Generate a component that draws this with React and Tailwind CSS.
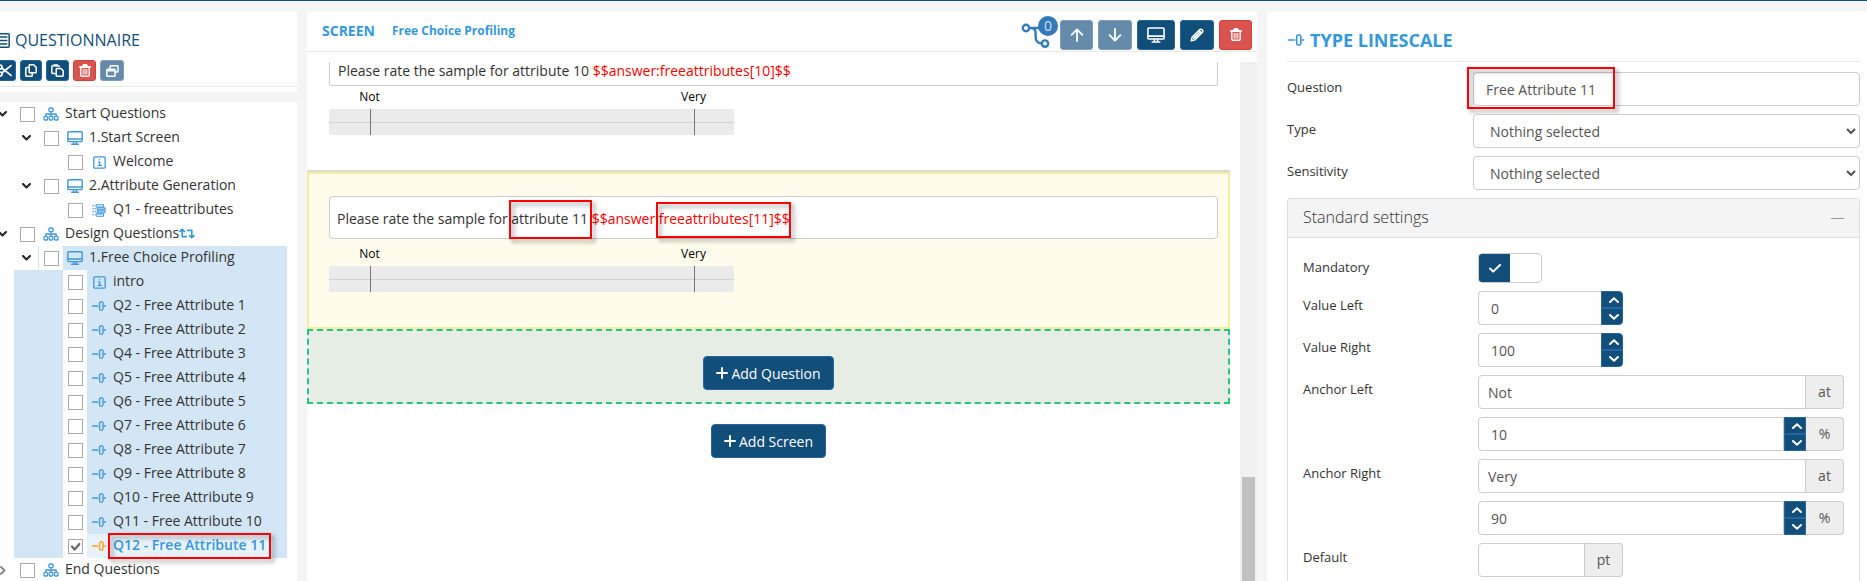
import React, { useState } from 'react';

/* ---------- icons ---------- */

const Icon = ({ w = 16, h = 16, box, className = '', sw = 1.4, children }) => (
  <svg
    width={w}
    height={h}
    viewBox={box || `0 0 ${w} ${h}`}
    fill="none"
    stroke="currentColor"
    strokeWidth={sw}
    strokeLinecap="round"
    strokeLinejoin="round"
    className={`shrink-0 ${className}`}
    aria-hidden="true"
  >
    {children}
  </svg>
);

const ChevronDown = ({ className }) => (
  <Icon w={9} h={6} sw={2} className={className}>
    <path d="M1 1l3.5 3.5L8 1" />
  </Icon>
);

const ChevronRight = ({ className }) => (
  <Icon w={6} h={9} sw={2} className={className}>
    <path d="M1 1l3.5 3.5L1 8" />
  </Icon>
);

const ChevronUp = () => (
  <Icon w={10} h={6} sw={2}>
    <path d="M1 5l4-3.7L9 5" />
  </Icon>
);

const SpinDown = () => (
  <Icon w={10} h={6} sw={2}>
    <path d="M1 1l4 3.7L9 1" />
  </Icon>
);

const SitemapIcon = () => (
  <Icon w={16} h={14} sw={1.3}>
    <rect x="5.9" y="1" width="4.2" height="3.6" rx="1" />
    <path d="M8 4.6v4.6M2.8 9.4V7h10.4v2.4" />
    <rect x="1" y="9.4" width="3.6" height="3.6" rx="1" />
    <rect x="6.2" y="9.4" width="3.6" height="3.6" rx="1" />
    <rect x="11.4" y="9.4" width="3.6" height="3.6" rx="1" />
  </Icon>
);

const MonitorIcon = ({ w = 16, h = 14, className }) => (
  <Icon w={w} h={h} box="0 0 16 14" className={className}>
    <rect x="0.8" y="0.8" width="14.4" height="9.8" rx="1" />
    <path d="M1 8h14M6.6 10.8v2M9.4 10.8v2M4.6 13.2h6.8" />
  </Icon>
);

const InfoIcon = () => (
  <Icon w={13} h={13} sw={1.3}>
    <rect x="0.8" y="0.8" width="11.4" height="11.4" rx="1.2" />
    <path d="M5.4 5.8h1.3v3.4M5 9.4h3.4M6.5 3.4v.3" />
  </Icon>
);

const AttributesIcon = () => (
  <Icon w={14} h={13} sw={1.1}>
    <path d="M.8 1.8h.8M.8 4.8h.8M.8 7.8h.8M.8 10.8h.8M3 4.8h1M3 7.8h1" />
    <rect x="4" y="0.7" width="7.6" height="2.3" rx="0.6" />
    <rect x="5.4" y="3.9" width="7.8" height="1.9" rx="0.6" />
    <rect x="5.4" y="6.9" width="7.8" height="1.9" rx="0.6" />
    <rect x="4" y="9.9" width="7.6" height="2.3" rx="0.6" />
  </Icon>
);

const LinescaleIcon = ({ w = 14, h = 10, className }) => (
  <Icon w={w} h={h} box="0 0 14 10" sw={1.3} className={className}>
    <path d="M0.7 5h5.2M11.2 5h2.2" />
    <rect x="7.6" y="0.9" width="3.4" height="8.2" rx="1" />
  </Icon>
);

const RandomizeIcon = () => (
  <Icon w={16} h={12} sw={1.6} className="text-[#3498db]">
    <path d="M1 3.4L3.2 1.2l2.2 2.2M3.2 1.4V8.6h4.2" />
    <path d="M8.6 2.4h4.2v7M10.6 7.6l2.2 2.2L15 7.6" />
  </Icon>
);

const ListIcon = () => (
  <Icon w={15} h={15} sw={1.5}>
    <rect x="0.8" y="0.8" width="13.4" height="13.4" rx="1" />
    <path d="M3 4h.2M3 7.5h.2M3 11h.2M5.4 4h6.4M5.4 7.5h6.4M5.4 11h6.4" />
  </Icon>
);

const ScissorsIcon = () => (
  <Icon w={15} h={13} sw={1.7}>
    <circle cx="3" cy="3" r="2" />
    <circle cx="3" cy="10" r="2" />
    <path d="M4.8 4L14 11.4M4.8 9L14 1.6" />
  </Icon>
);

const CopyIcon = () => (
  <Icon w={12} h={13} sw={1.5}>
    <path d="M4.2 1.4c0-.4.3-.6.6-.6h3.8l2.6 2.6v4.8c0 .4-.3.6-.6.6H4.8c-.3 0-.6-.2-.6-.6z" />
    <path d="M4 3.6H1.6c-.4 0-.8.4-.8.8v7c0 .4.4.8.8.8h4.8c.4 0 .8-.4.8-.8V9" />
  </Icon>
);

const PasteIcon = () => (
  <Icon w={13} h={13} sw={1.5}>
    <path d="M4 9.4H1.6c-.4 0-.8-.4-.8-.8V2.6c0-.4.4-.8.8-.8h5.8c.4 0 .8.4.8.8" />
    <path d="M3 1.2h3.2" strokeWidth="2" />
    <path d="M5.2 5.2c0-.4.3-.6.6-.6h4.2l2.2 2.2v4.8c0 .4-.3.6-.6.6H5.8c-.3 0-.6-.2-.6-.6z" />
  </Icon>
);

const TrashIcon = () => (
  <Icon w={12} h={13} sw={1.4}>
    <path d="M1 3h10M3.8 2.8l.7-1.8h3l.7 1.8" strokeWidth="1.8" />
    <path d="M1.8 3.4v7.8c0 .6.4 1 1 1h6.4c.6 0 1-.4 1-1V3.4" />
    <path d="M4.2 5.4v4.8M6 5.4v4.8M7.8 5.4v4.8" strokeWidth="1" />
  </Icon>
);

const WindowsIcon = () => (
  <Icon w={13} h={12} sw={1.5}>
    <path d="M4 3.4V1.6c0-.4.4-.8.8-.8h6.4c.4 0 .8.4.8.8v4.6c0 .4-.4.8-.8.8H9.6" />
    <rect x="0.8" y="4.2" width="8.2" height="7" rx="0.8" />
    <path d="M1 5.4h7.8" strokeWidth="2" />
  </Icon>
);

const ArrowUp = () => (
  <Icon w={14} h={14} sw={1.8}>
    <path d="M7 13V1.4M1.6 6.8L7 1.4l5.4 5.4" />
  </Icon>
);

const ArrowDown = () => (
  <Icon w={14} h={14} sw={1.8}>
    <path d="M7 1v11.6M1.6 7.2L7 12.6l5.4-5.4" />
  </Icon>
);

const PencilIcon = () => (
  <Icon w={14} h={14} sw={1.5}>
    <path d="M1.2 12.8l.9-3.6 7.4-7.4c.8-.8 1.8-.8 2.4-.2l.5.5c.6.6.6 1.6-.2 2.4l-7.4 7.4z" />
    <path d="M4 10l5.4-5.4M9 2.6L11.4 5" strokeWidth="1.8" />
  </Icon>
);

const BranchIcon = () => (
  <Icon w={30} h={28} sw={2.4} className="text-[#337ab7]">
    <circle cx="5" cy="7" r="3.2" />
    <path d="M8.4 7H24M10 7c3.6 0 4.6 1.6 4.6 5v3c0 4.6 1.4 7.4 5.6 7.4" />
    <circle cx="24" cy="22.6" r="3.2" />
  </Icon>
);

const PlusIcon = () => (
  <Icon w={12} h={12} sw={2}>
    <path d="M6 1v10M1 6h10" />
  </Icon>
);

const CheckIcon = () => (
  <Icon w={12} h={9} sw={2}>
    <path d="M1 4.6l3.2 3L11 1" />
  </Icon>
);

/* ---------- tree ---------- */

const typeIcons = {
  group: <SitemapIcon />,
  screen: <MonitorIcon />,
  info: <InfoIcon />,
  attributes: <AttributesIcon />,
  linescale: <LinescaleIcon />,
};

const nodes = [
  { id: 'start', level: 0, type: 'group', label: 'Start Questions', open: true },
  { id: 's1', level: 1, type: 'screen', label: '1.Start Screen', open: true },
  { id: 'welcome', level: 2, type: 'info', label: 'Welcome' },
  { id: 's2', level: 1, type: 'screen', label: '2.Attribute Generation', open: true },
  { id: 'q1', level: 2, type: 'attributes', label: 'Q1 - freeattributes' },
  { id: 'design', level: 0, type: 'group', label: 'Design Questions', open: true, random: true },
  { id: 's3', level: 1, type: 'screen', label: '1.Free Choice Profiling', open: true, marked: true },
  { id: 'intro', level: 2, type: 'info', label: 'intro', marked: true },
  ...Array.from({ length: 11 }, (_, i) => ({
    id: `q${i + 2}`,
    level: 2,
    type: 'linescale',
    label: `Q${i + 2} - Free Attribute ${i + 1}`,
    marked: true,
    current: i === 10,
  })),
  { id: 'end', level: 0, type: 'group', label: 'End Questions', open: false },
];

/* red frame that highlights a part of the page */
const Marker = ({ className }) => (
  <span
    className={`pointer-events-none absolute border-2 border-[#fe0000] drop-shadow-[3px_3px_2px_rgba(0,0,0,0.4)] ${className}`}
  />
);

const TreeRow = ({ node, checked, onCheck }) => {
  const { level, marked, current } = node;
  return (
    <li className={`flex h-6 items-stretch pr-[10px] ${level > 0 ? 'pl-[14px]' : ''}`}>
      {level === 2 && <span className={`w-[49px] shrink-0 ${marked ? 'bg-[#d2e6f5]' : ''}`} />}
      {level < 2 && (
        <button
          type="button"
          aria-label={`Toggle ${node.label}`}
          className={`flex shrink-0 items-center text-[#222] ${
            level === 0 ? 'w-[15px] justify-start' : 'w-[25px] justify-center'
          } ${marked ? 'border-r border-[#d2e6f5]' : ''}`}
        >
          {node.open ? (
            <ChevronDown className={level === 0 ? '-ml-[2px]' : ''} />
          ) : (
            <ChevronRight className="text-[#888]" />
          )}
        </button>
      )}
      <span className="flex w-6 shrink-0 items-center justify-center">
        <span className="relative flex">
          <input
            id={`node-${node.id}`}
            type="checkbox"
            checked={checked}
            onChange={onCheck}
            className="size-[15px] appearance-none border border-[#aaa] bg-white"
          />
          {checked && (
            <Icon w={15} h={15} sw={2.2} className="pointer-events-none absolute inset-0 text-[#666]">
              <path d="M4 7.6l2.6 2.8L11.4 5" />
            </Icon>
          )}
        </span>
      </span>
      <span className={`flex min-w-0 flex-1 ${marked ? 'bg-[#d2e6f5]' : ''}`}>
        <label
          htmlFor={`node-${node.id}`}
          className={`flex whitespace-nowrap ${
            level === 2 ? 'gap-[7px] pl-[5px]' : 'gap-[6px] pl-1'
          } ${current ? 'bg-[#e8f2fb] pr-1 font-semibold text-[#3498db]' : ''}`}
        >
          <span
            className={`flex items-center justify-center ${level === 2 ? 'w-[14px]' : 'w-4'} ${
              current ? 'text-[#ff9d1e]' : 'text-[#3f97db]'
            }`}
          >
            {typeIcons[node.type]}
          </span>
          <span className="relative self-start leading-[22px]">
            {node.label}
            {current && <Marker className="-inset-x-[5px] -top-px -bottom-[3px]" />}
          </span>
        </label>
        {node.random && (
          <span className="flex items-center">
            <RandomizeIcon />
          </span>
        )}
      </span>
    </li>
  );
};

/* ---------- buttons ---------- */

const tones = {
  primary: 'bg-[#114e7a] border-[#2566a0] text-white',
  muted: 'bg-[#648ba9] border-[#7a9fc2] text-white',
  danger: 'bg-[#d9534f] border-[#d43f3a] text-white',
};

const IconButton = ({ label, tone = 'primary', className = '', children }) => (
  <button
    type="button"
    aria-label={label}
    className={`flex shrink-0 items-center justify-center rounded-[3px] border ${tones[tone]} ${className}`}
  >
    {children}
  </button>
);

const AddButton = ({ children }) => (
  <button
    type="button"
    className="flex h-[34px] items-center gap-[3px] rounded border border-[#2566a0] bg-[#114e7a] px-3 text-white"
  >
    <PlusIcon />
    {children}
  </button>
);

/* ---------- screen preview ---------- */

const LineScale = () => (
  <div className="w-[405px] max-w-full text-[12px] leading-4 text-black">
    <div className="relative h-4">
      <span className="absolute left-[10%] -translate-x-1/2">Not</span>
      <span className="absolute left-[90%] -translate-x-1/2">Very</span>
    </div>
    <div className="relative mt-1 h-[26px] rounded-[2px] bg-[#ebebeb]">
      <span className="absolute inset-x-0 top-[13px] h-px bg-[#d2d2d2]" />
      <span className="absolute inset-y-0 left-[10%] w-px bg-[#777]" />
      <span className="absolute inset-y-0 left-[90%] w-px bg-[#777]" />
    </div>
  </div>
);

const ScreenPanel = () => (
  <section className="flex min-h-0 flex-col bg-white">
    <header className="flex h-[41px] shrink-0 items-center border-b border-[#e9e9e9] pr-[5px] pl-[15px] font-bold text-[#3498db]">
      <h2 className="pb-[2px] text-[14px]">SCREEN</h2>
      <span className="ml-[17px] text-[12px]">Free Choice Profiling</span>
      <div className="ml-auto flex items-center gap-[5px] pt-[7px]">
        <span className="relative mr-1 flex h-[30px] items-center">
          <BranchIcon />
          <span className="absolute -top-1 -right-[7px] flex size-5 items-center justify-center rounded-full bg-[#337ab7] text-[14px] leading-5 font-normal text-[#cfe2f3]">
            0
          </span>
        </span>
        <IconButton label="Move up" tone="muted" className="h-[30px] w-[33px]"><ArrowUp /></IconButton>
        <IconButton label="Move down" tone="muted" className="h-[30px] w-[34px]"><ArrowDown /></IconButton>
        <IconButton label="Preview" className="h-[30px] w-[38px]"><MonitorIcon w={18} h={16} /></IconButton>
        <IconButton label="Edit" className="h-[30px] w-[34px]"><PencilIcon /></IconButton>
        <IconButton label="Delete" tone="danger" className="h-[30px] w-[33px]"><TrashIcon /></IconButton>
      </div>
    </header>

    <div className="mt-[10px] flex min-h-0 flex-1">
      <div className="mr-[10px] min-w-0 flex-1">
        <div className="h-[108px] pr-3 pl-[22px]">
          <p className="h-6 rounded-b-[3px] border border-t-0 border-[#ccc] px-2 leading-[18px]">
            Please rate the sample for attribute 10{' '}
            <span className="text-[#f00]">$$answer:freeattributes[10]$$</span>
          </p>
          <div className="pt-[3px]">
            <LineScale />
          </div>
        </div>

        <div className="h-[2px] bg-[#dadada]" />
        <div className="h-[157px] border-2 border-[#f3ef9d] bg-[#fffceb] pt-[22px] pr-[10px] pl-5">
          <p className="h-[43px] rounded border border-[#ccc] bg-white px-[7px] leading-[43px]">
            Please rate the sample for{' '}
            <span className="relative inline-block leading-5">
              attribute 11
              <Marker className="-top-[9px] -right-1 -bottom-[10px] -left-[2px]" />
            </span>{' '}
            <span className="text-[#f00]">
              $$answer:
              <span className="relative inline-block leading-5">
                freeattributes[11]$$
                <Marker className="-top-[7px] -right-px -bottom-[9px] -left-[3px]" />
              </span>
            </span>
          </p>
          <div className="pt-[7px]">
            <LineScale />
          </div>
        </div>

        <div className="flex h-[75px] justify-center border-2 border-dashed border-[#28c486] bg-[#e6ede4] pt-[25px]">
          <AddButton>Add Question</AddButton>
        </div>
        <div className="mt-5 flex justify-center">
          <AddButton>Add Screen</AddButton>
        </div>
      </div>

      <div className="flex w-[17px] shrink-0 flex-col bg-[#f0f0f0] px-[2px]">
        <span className="h-4/5" />
        <span className="flex-1 bg-[#c1c1c1]" />
      </div>
    </div>
  </section>
);

/* ---------- settings ---------- */

const control = 'h-[34px] min-w-0 border border-[#ccc] bg-white text-[#555] outline-none';

const Spinner = ({ name, className = '' }) => (
  <span className={`flex w-[22px] shrink-0 flex-col overflow-hidden border border-[#2566a0] bg-[#114e7a] text-white ${className}`}>
    <button type="button" aria-label={`Increase ${name}`} className="flex flex-1 items-center justify-center pl-1">
      <ChevronUp />
    </button>
    <button
      type="button"
      aria-label={`Decrease ${name}`}
      className="flex flex-1 items-center justify-center border-t-2 border-[#2566a0] pl-1"
    >
      <SpinDown />
    </button>
  </span>
);

const Addon = ({ children }) => (
  <span className="flex w-[38px] shrink-0 items-center justify-center rounded-r border border-l-0 border-[#ccc] bg-[#eee] pb-px text-[#555]">
    {children}
  </span>
);

const Row = ({ label, id, children }) => (
  <div className="grid grid-cols-[175fr_366fr]">
    <label htmlFor={id} className="pt-1 text-[13px] leading-5">{label}</label>
    <div className="flex">{children}</div>
  </div>
);

const TopRow = ({ label, id, children }) => (
  <div className="grid grid-cols-[186fr_387fr]">
    <label htmlFor={id} className="pt-[5px] text-[13px] leading-5">{label}</label>
    <div className="relative flex">{children}</div>
  </div>
);

const NothingSelect = ({ id }) => (
  <select id={id} className={`${control} w-full rounded pl-3`}>
    <option>Nothing selected</option>
  </select>
);

const SettingsPanel = () => {
  const [mandatory, setMandatory] = useState(true);

  return (
    <section className="flex min-h-0 flex-col overflow-hidden rounded-tl bg-white pr-[7px] pl-5">
      <h2 className="flex h-[51px] shrink-0 items-center gap-[5px] border-b border-[#e9e9e9] pt-2 text-[18px] font-bold text-[#3498db]">
        <LinescaleIcon w={18} h={12} />
        TYPE LINESCALE
      </h2>

      <div className="mt-[10px] flex flex-col gap-2">
        <TopRow label="Question" id="question">
          <input id="question" defaultValue="Free Attribute 11" className={`${control} w-full rounded px-3`} />
          <Marker className="-top-[5px] -bottom-[3px] -left-[6px] w-[148px]" />
        </TopRow>
        <TopRow label="Type" id="type">
          <NothingSelect id="type" />
        </TopRow>
        <TopRow label="Sensitivity" id="sensitivity">
          <NothingSelect id="sensitivity" />
        </TopRow>
      </div>

      <div className="mt-2 flex-1 rounded-t border border-b-0 border-[#ddd]">
        <div className="flex h-[39px] items-center justify-between rounded-t border-b border-[#ddd] bg-[#f4f4f4] px-[15px]">
          <h3 className="pb-[2px] text-[16px] font-light">Standard settings</h3>
          <button type="button" aria-label="Collapse" className="flex h-4 w-[13px] items-center">
            <span className="h-px w-full bg-[#999]" />
          </button>
        </div>

        <div className="flex flex-col gap-2 px-[15px] pt-[15px]">
          <Row label="Mandatory" id="mandatory">
            <span className="relative flex h-[30px] w-16 overflow-hidden rounded border border-[#ccc] bg-white">
              <input
                id="mandatory"
                type="checkbox"
                checked={mandatory}
                onChange={(e) => setMandatory(e.target.checked)}
                className="h-full w-1/2 appearance-none bg-[#114e7a]"
              />
              <span className="pointer-events-none absolute inset-y-0 left-0 flex w-1/2 items-center justify-center text-white">
                {mandatory && <CheckIcon />}
              </span>
            </span>
          </Row>
          <Row label="Value Left" id="value-left">
            <input id="value-left" defaultValue="0" className={`${control} w-[123px] rounded-l border-r-0 px-3`} />
            <Spinner name="Value Left" className="rounded-r" />
          </Row>
          <Row label="Value Right" id="value-right">
            <input id="value-right" defaultValue="100" className={`${control} w-[123px] rounded-l border-r-0 px-3`} />
            <Spinner name="Value Right" className="rounded-r" />
          </Row>
          <Row label="Anchor Left" id="anchor-left">
            <input id="anchor-left" defaultValue="Not" className={`${control} flex-1 rounded-l px-[9px]`} />
            <Addon>at</Addon>
          </Row>
          <Row>
            <input aria-label="Anchor left position" defaultValue="10" className={`${control} flex-1 rounded-l px-3`} />
            <Spinner name="anchor left position" />
            <Addon>%</Addon>
          </Row>
          <Row label="Anchor Right" id="anchor-right">
            <input id="anchor-right" defaultValue="Very" className={`${control} flex-1 rounded-l px-[9px]`} />
            <Addon>at</Addon>
          </Row>
          <Row>
            <input aria-label="Anchor right position" defaultValue="90" className={`${control} flex-1 rounded-l px-3`} />
            <Spinner name="anchor right position" />
            <Addon>%</Addon>
          </Row>
          <Row label="Default" id="default">
            <input id="default" className={`${control} w-[107px] rounded-l px-3`} />
            <Addon>pt</Addon>
          </Row>
        </div>
      </div>
    </section>
  );
};

const QuestionnairePanel = () => {
  const [checked, setChecked] = useState({ q12: true });

  const toggle = (id) => setChecked((c) => ({ ...c, [id]: !c[id] }));

  return (
    <div className="flex min-h-0 flex-col gap-[10px] overflow-hidden">
      <div className="h-[81px] shrink-0 bg-white pb-[5px]">
        <div className="flex h-full flex-col border-b border-[#e9e9e9] pt-[19px]">
          <h2 className="-ml-[5px] flex h-5 items-center gap-[5px] text-[16px] text-[#114e7a]">
            <ListIcon />
            QUESTIONNAIRE
          </h2>
          <div className="mt-[10px] -ml-2 flex gap-1">
            <IconButton label="Cut" className="h-[21px] w-6"><ScissorsIcon /></IconButton>
            <IconButton label="Copy" className="h-[21px] w-[22px]"><CopyIcon /></IconButton>
            <IconButton label="Paste" className="h-[21px] w-[23px]"><PasteIcon /></IconButton>
            <IconButton label="Delete" tone="danger" className="h-[21px] w-[23px]"><TrashIcon /></IconButton>
            <IconButton label="Duplicate" tone="muted" className="h-[21px] w-6"><WindowsIcon /></IconButton>
          </div>
        </div>
      </div>
      <ul className="min-h-0 flex-1 overflow-hidden bg-white">
        {nodes.map((node) => (
          <TreeRow
            key={node.id}
            node={node}
            checked={!!checked[node.id]}
            onCheck={() => toggle(node.id)}
          />
        ))}
      </ul>
    </div>
  );
};

export default function App() {
  return (
    <div className="flex h-screen flex-col overflow-hidden bg-[#f5f5f5] font-['Open_Sans',sans-serif] text-[14px] text-[#333]">
      <div className="h-px shrink-0 bg-[#114e7a]" />
      <main className="mt-[10px] grid min-h-0 flex-1 grid-cols-[297fr_950fr_600fr] grid-rows-[minmax(0,1fr)] gap-[10px]">
        <QuestionnairePanel />
        <ScreenPanel />
        <SettingsPanel />
      </main>
    </div>
  );
}
